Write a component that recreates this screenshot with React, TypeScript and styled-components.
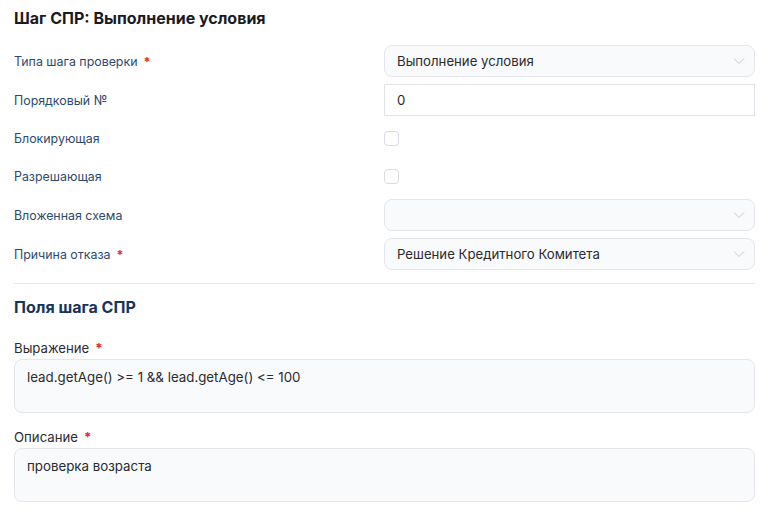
import React from "react";
import styled, { createGlobalStyle } from "styled-components";

const Global = createGlobalStyle`
  html, body { margin: 0; padding: 0; background: #ffffff; }
  body { font-family: Inter, "Noto Sans", "Liberation Sans", sans-serif; }
  * { box-sizing: border-box; }
`;

const Page = styled.div`
  padding: 8px 15px 0 14px;
  display: flex;
  flex-direction: column;
`;

const Title = styled.h1<{ $navy?: boolean }>`
  margin: 0;
  font-size: 16px;
  line-height: 20px;
  font-weight: 700;
  color: ${(p) => (p.$navy ? "#16355a" : "#1b1b1f")};
`;

const Form = styled.div`
  display: grid;
  grid-template-columns: 370px 1fr;
  row-gap: 7px;
  margin-top: 17px;
`;

const Label = styled.div<{ $h: number }>`
  height: ${(p) => p.$h}px;
  display: flex;
  align-items: center;
  font-size: 12.4px;
  color: #2d4a6d;
`;

const Star = styled.span`
  color: #e0282e;
  margin-left: 6px;
  font-weight: 700;
`;

const Control = styled.div<{ $h: number }>`
  height: ${(p) => p.$h}px;
  display: flex;
  align-items: center;
`;

const SelectBox = styled.div`
  width: 100%;
  height: 32px;
  border: 1px solid #e4e6eb;
  border-radius: 8px;
  background: #f9fafc;
  display: flex;
  align-items: center;
  justify-content: space-between;
  padding: 0 9px 0 12px;
  font-size: 13.2px;
  color: #2a2a2e;
`;

const TextInput = styled.div`
  width: 100%;
  height: 32px;
  border: 1px solid #e1e3e8;
  background: #ffffff;
  display: flex;
  align-items: center;
  padding: 0 12px;
  font-size: 13.2px;
  color: #2a2a2e;
`;

const Check = styled.div`
  width: 15px;
  height: 15px;
  border: 1px solid #d8dbe0;
  border-radius: 4px;
  background: #ffffff;
`;

const Divider = styled.hr`
  border: 0;
  border-top: 1px solid #e6e8ec;
  margin: 13px 0 13px;
`;

const FieldLabel = styled.div`
  font-size: 13.2px;
  line-height: 16px;
  color: #2a2a2e;
  margin-bottom: 3px;
`;

const Area = styled.div`
  height: 54px;
  border: 1px solid #e4e6eb;
  border-radius: 8px;
  background: #f9fafc;
  padding: 8px 12px;
  font-size: 13.3px;
  line-height: 18px;
  color: #2a2a2e;
`;

const Field = styled.div<{ $mt: number }>`
  display: flex;
  flex-direction: column;
  margin-top: ${(p) => p.$mt}px;
`;

const Chevron = () => (
  <svg width="12" height="8" viewBox="0 0 12 8" fill="none">
    <path d="M1 1.5 L6 6.5 L11 1.5" stroke="#c0c3c9" strokeWidth="0.9" />
  </svg>
);

export default function App() {
  return (
    <>
      <Global />
      <Page>
        <Title>Шаг СПР: Выполнение условия</Title>
        <Form>
          <Label $h={32}>
            Типа шага проверки<Star>*</Star>
          </Label>
          <Control $h={32}>
            <SelectBox>
              <span>Выполнение условия</span>
              <Chevron />
            </SelectBox>
          </Control>

          <Label $h={32}>Порядковый №</Label>
          <Control $h={32}>
            <TextInput>0</TextInput>
          </Control>

          <Label $h={31}>Блокирующая</Label>
          <Control $h={31}>
            <Check />
          </Control>

          <Label $h={31}>Разрешающая</Label>
          <Control $h={31}>
            <Check />
          </Control>

          <Label $h={32}>Вложенная схема</Label>
          <Control $h={32}>
            <SelectBox>
              <span />
              <Chevron />
            </SelectBox>
          </Control>

          <Label $h={32}>
            Причина отказа<Star>*</Star>
          </Label>
          <Control $h={32}>
            <SelectBox>
              <span>Решение Кредитного Комитета</span>
              <Chevron />
            </SelectBox>
          </Control>
        </Form>
        <Divider />
        <Title $navy>Поля шага СПР</Title>
        <Field $mt={23}>
          <FieldLabel>
            Выражение<Star>*</Star>
          </FieldLabel>
          <Area>lead.getAge() &gt;= 1 &amp;&amp; lead.getAge() &lt;= 100</Area>
        </Field>
        <Field $mt={16}>
          <FieldLabel>
            Описание<Star>*</Star>
          </FieldLabel>
          <Area>проверка возраста</Area>
        </Field>
      </Page>
    </>
  );
}
